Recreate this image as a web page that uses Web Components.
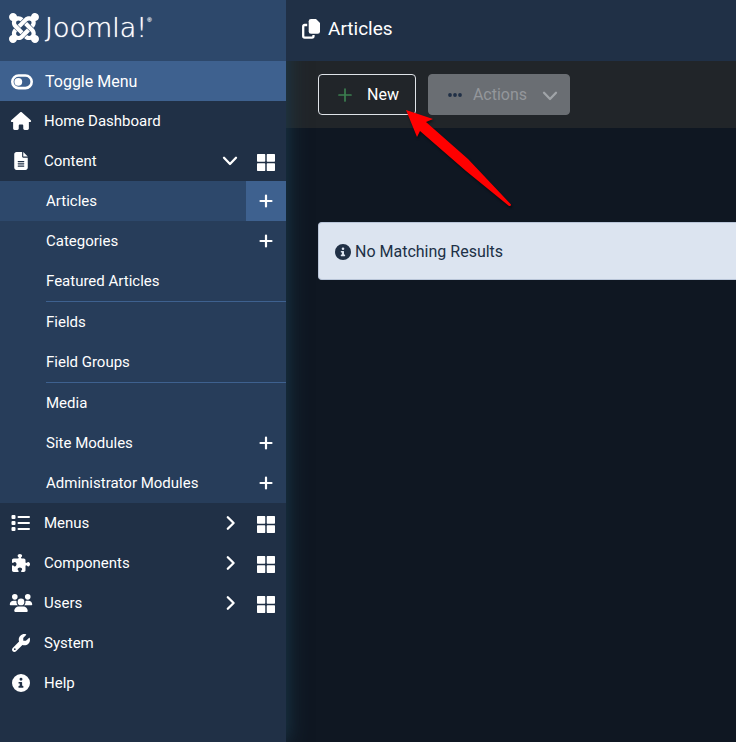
<!DOCTYPE html>
<html lang="en">
<head>
<meta charset="utf-8">
<title>Articles - Joomla! Administrator</title>
<style>
html, body { margin: 0; min-height: 100%; background: #0f1722; }
body { font-family: Roboto, "Liberation Sans", sans-serif; color: #fff; overflow-x: hidden; }
</style>
</head>
<body>
<admin-page></admin-page>
<script>
const ICONS = {
  toggle: ['0 0 22 16', '<rect x="1.3" y="1.5" width="19.400" height="12.600" rx="6.3" fill="none" stroke="currentColor" stroke-width="2.6"/><circle cx="7.3" cy="7.8" r="3.9"/>'],
  home: ['0 0 576 512', '<path d="M575.8 255.5c0 18-15 32.1-32 32.1h-32l.7 160.2c0 2.7-.2 5.400-.5 8.100V472c0 22.100-17.900 40-40 40H392c-22.100 0-40-17.900-40-40V384c0-17.700-14.300-32-32-32H256c-17.700 0-32 14.300-32 32v88c0 22.100-17.900 40-40 40H104c-22.100 0-40-17.900-40-40V287.600H32c-18 0-32-14-32-32.100c0-9 3-17 10-24L266.400 8c7-7 15-8 22-8s15 2 21 7L564.800 231.500c8 7 12 15 11 24z"/>'],
  file: ['0 0 384 512', '<path fill-rule="evenodd" d="M64 0C28.700 0 0 28.700 0 64V448c0 35.300 28.700 64 64 64H320c35.300 0 64-28.700 64-64V160H256c-17.700 0-32-14.300-32-32V0H64zM112 256H272c8.800 0 16 7.200 16 16s-7.200 16-16 16H112c-8.800 0-16-7.200-16-16s7.200-16 16-16zm0 64H272c8.800 0 16 7.200 16 16s-7.200 16-16 16H112c-8.800 0-16-7.200-16-16s7.200-16 16-16zm0 64H272c8.800 0 16 7.200 16 16s-7.200 16-16 16H112c-8.800 0-16-7.200-16-16s7.200-16 16-16z"/><path d="M256 0V128H384z"/>'],
  list: ['0 0 19 18', '<rect x="0" y="1" width="4" height="4" rx="1"/><rect x="0" y="7" width="4" height="4" rx="1"/><rect x="0" y="13" width="4" height="4" rx="1"/><path d="M7 3H17.500M7 9H17.500M7 15H17.500" stroke="currentColor" stroke-width="2" stroke-linecap="round"/>'],
  puzzle: ['0 0 512 512', '<path d="M192 104.8c0-9.2-5.8-17.3-13.2-22.8C167.2 73.3 160 61.3 160 48c0-26.5 28.700-48 64-48s64 21.500 64 48c0 13.300-7.200 25.300-18.800 34c-7.400 5.500-13.200 13.600-13.200 22.800c0 12.800 10.400 23.200 23.200 23.200H336c26.500 0 48 21.500 48 48v56.800c0 12.800 10.400 23.200 23.200 23.200c9.200 0 17.300-5.800 22.800-13.200c8.700-11.600 20.700-18.800 34-18.800c26.500 0 48 28.700 48 64s-21.500 64-48 64c-13.300 0-25.300-7.200-34-18.800c-5.500-7.400-13.600-13.200-22.800-13.200c-12.800 0-23.200 10.400-23.200 23.200V464c0 26.500-21.500 48-48 48H279.200c-12.800 0-23.200-10.400-23.200-23.200c0-9.200 5.800-17.300 13.200-22.800c11.600-8.700 18.800-20.700 18.800-34c0-26.500-28.700-48-64-48s-64 21.500-64 48c0 13.300 7.200 25.300 18.800 34c7.400 5.500 13.200 13.600 13.200 22.800c0 12.800-10.400 23.200-23.200 23.200H48c-26.500 0-48-21.500-48-48V343.200C0 330.400 10.400 320 23.200 320c9.200 0 17.300 5.800 22.800 13.200C54.700 344.800 66.700 352 80 352c26.500 0 48-28.700 48-64s-21.500-64-48-64c-13.300 0-25.300 7.200-34 18.800C40.500 250.200 32.400 256 23.200 256C10.400 256 0 245.600 0 232.800V176c0-26.500 21.500-48 48-48H168.800c12.800 0 23.200-10.400 23.200-23.200z"/>'],
  users: ['0 0 640 512', '<path d="M144 0a80 80 0 1 1 0 160A80 80 0 1 1 144 0zM512 0a80 80 0 1 1 0 160A80 80 0 1 1 512 0zM0 298.700C0 239.800 47.800 192 106.700 192h42.700c15.900 0 31 3.500 44.600 9.700c-1.300 7.200-1.900 14.700-1.900 22.300c0 38.200 16.800 72.500 43.300 96H21.300C9.600 320 0 310.400 0 298.700zM404.600 320c26.600-23.500 43.300-57.800 43.300-96c0-7.600-.7-15-1.900-22.300c13.600-6.300 28.700-9.700 44.600-9.700h42.700C592.200 192 640 239.800 640 298.700c0 11.800-9.600 21.300-21.300 21.300H404.600zM224 224a96 96 0 1 1 192 0 96 96 0 1 1-192 0zM128 485.300C128 411.700 187.700 352 261.300 352H378.700C452.300 352 512 411.700 512 485.300c0 14.700-11.900 26.700-26.700 26.700H154.700c-14.700 0-26.700-11.900-26.700-26.700z"/>'],
  wrench: ['0 0 512 512', '<path fill-rule="evenodd" d="M352 320c88.400 0 160-71.600 160-160c0-15.300-2.200-30.100-6.200-44.200c-3.100-10.800-16.400-13.200-24.300-5.300l-76.800 76.800c-3 3-7.100 4.700-11.300 4.700H336c-8.800 0-16-7.200-16-16V118.600c0-4.200 1.700-8.300 4.700-11.300l76.800-76.800c7.900-7.900 5.400-21.200-5.300-24.300C382.100 2.200 367.300 0 352 0C263.600 0 192 71.600 192 160c0 19.100 3.400 37.500 9.500 54.500L19.900 396.100C7.200 408.800 0 426.100 0 444.100C0 481.600 30.400 512 67.900 512c18 0 35.300-7.200 48-19.900L297.500 310.500c17 6.200 35.400 9.500 54.500 9.500zM80 408a24 24 0 1 1 0 48 24 24 0 1 1 0-48z"/>'],
  info: ['0 0 512 512', '<path fill-rule="evenodd" d="M256 512A256 256 0 1 0 256 0a256 256 0 1 0 0 512zM200 336h20V272H200c-10 0-16-6-16-16v-16c0-10 6-16 16-16h72c10 0 16 6 16 16v96h20c10 0 16 6 16 16v24c0 10-6 16-16 16H200c-10 0-16-6-16-16v-24c0-10 6-16 16-16zm56-226a42 42 0 1 1 0 84 42 42 0 1 1 0-84z"/>'],
  copy: ['0 0 18 20', '<path d="M9 0h5l4 4v8.500a2.300 2.300 0 0 1-2.300 2.300H9a2.300 2.300 0 0 1-2.300-2.300V2.300A2.300 2.300 0 0 1 9 0z"/><path d="M5.200 6H2.600A1.400 1.400 0 0 0 1.200 7.400v9.700a1.500 1.500 0 0 0 1.500 1.500H10a1.500 1.500 0 0 0 1.500-1.500v-1" fill="none" stroke="currentColor" stroke-width="2.300"/>'],
  plus: ['0 0 14 14', '<path d="M7 1.500V12.500M1.500 7H12.500" stroke="currentColor" stroke-width="2.200" stroke-linecap="round"/>'],
  plusthin: ['0 0 14 14', '<path d="M7 1V13M1 7H13" stroke="currentColor" stroke-width="1.700" stroke-linecap="round"/>'],
  grid: ['0 0 17 16', '<path d="M.6 0H7.200a.6.6 0 0 1 .6.6V6.600a.6.6 0 0 1-.6.6H.6a.6.6 0 0 1-.6-.6V.6A.6.6 0 0 1 .6 0zM9.800 0h6.600a.6.6 0 0 1 .6.6V6.600a.6.6 0 0 1-.6.6H9.800a.6.6 0 0 1-.6-.6V.6a.6.6 0 0 1 .6-.6zM.6 8.800H7.200a.6.6 0 0 1 .6.6v6a.6.6 0 0 1-.6.6H.6a.6.6 0 0 1-.6-.6v-6a.6.6 0 0 1 .6-.6zM9.800 8.800h6.600a.6.6 0 0 1 .6.6v6a.6.6 0 0 1-.6.6H9.800a.6.6 0 0 1-.6-.6v-6a.6.6 0 0 1 .6-.6z"/>'],
  down: ['0 0 16 10', '<path d="M2 1.800L8 8L14 1.800" fill="none" stroke="currentColor" stroke-width="2.300" stroke-linecap="round" stroke-linejoin="round"/>'],
  right: ['0 0 10 16', '<path d="M2.800 2.200L8.600 8L2.800 13.800" fill="none" stroke="currentColor" stroke-width="2.300" stroke-linecap="round" stroke-linejoin="round"/>'],
  dots: ['0 0 14 4', '<circle cx="2" cy="2" r="1.900"/><circle cx="7" cy="2" r="1.900"/><circle cx="12" cy="2" r="1.900"/>'],
  joomla: ['0 32 448 448', '<path d="M.6 92.100C.6 58.800 27.400 32 60.400 32c30 0 54.500 21.900 59.200 50.200 32.600-7.600 67.100.6 96.500 30l-44.300 44.300c-20.500-20.500-42.600-16.300-55.400-3.500-14.300 14.300-14.300 37.900 0 52.200l99.500 99.500-44 44.300c-87.700-87.200-49.700-49.700-99.800-99.700-26.800-26.500-35-64.800-24.800-98.900C20.400 144.600.6 120.700.6 92.100zm129.500 116.400l44.300 44.300c10-10 89.700-89.700 99.700-99.800 14.300-14.300 37.600-14.300 51.900 0 12.800 12.800 17 35-3.500 55.400l44 44.300c31.200-31.200 38.500-67.600 28.900-101.200 29.200-4.100 51.900-29.200 51.900-59.500 0-33.200-26.800-60.100-59.800-60.100-30.300 0-55.400 22.500-59.500 51.600-33.800-9.900-71.700-1.500-98.300 25.100-18.300 19.100-71.100 71.500-99.600 99.900zm266.300 152.200c8.200-32.700-.9-68.500-26.300-93.900-11.800-12.200 5 4.700-99.500-99.700l-44.300 44.300 99.700 99.700c14.300 14.300 14.300 37.600 0 51.900-12.800 12.800-35 17-55.400-3.500l-44 44.300c27.600 30.200 68 38.800 102.700 28 5.500 27.400 29.700 48.100 58.900 48.100 33 0 59.800-26.800 59.800-60.100 0-30.200-22.500-55-51.600-59.100zm-84.300-53.100l-44-44.300c-87 86.400-50.400 50.400-99.700 99.800-14.300 14.300-37.600 14.300-51.900 0-13.100-13.400-16.900-35.300 3.200-55.400l-44-44.300c-30.200 30.200-38 65.200-29.500 98.300-26.700 6-46.200 29.900-46.200 58.200C0 453.200 26.800 480 59.800 480c28.600 0 52.500-19.800 58.600-46.700 32.700 8.200 68.500-.6 94.200-26 32.100-32 12.200-12.400 99.500-99.700z"/>']
};

const define = (name, html, setup) => {
  const template = document.createElement('template');
  template.innerHTML = html;
  customElements.define(name, class extends HTMLElement {
    constructor() {
      super();
      this.attachShadow({ mode: 'open' }).append(template.content.cloneNode(true));
    }
    connectedCallback() { if (setup) setup(this, this.shadowRoot); }
  });
};

define('ui-icon', `<style>
  :host { display: inline-flex; flex: none; width: 20px; height: 20px; }
  svg { width: 100%; height: 100%; fill: currentColor; display: block; }
</style><svg aria-hidden="true"></svg>`, (el, root) => {
  const [box, shapes] = ICONS[el.getAttribute('name')];
  const svg = root.querySelector('svg');
  svg.setAttribute('viewBox', box);
  svg.innerHTML = shapes;
});

define('brand-logo', `<style>
  :host { display: block; background: #2d486b; }
  a { display: flex; align-items: center; gap: 6px; height: 61px; padding: 0 0 5px 9px; box-sizing: border-box; color: #fff; text-decoration: none; }
  ui-icon { width: 30px; height: 30px; }
  .word { font: 200 27px/32px "DejaVu Sans Light", "DejaVu Sans", sans-serif; display: flex; text-shadow: 0 0 1px #fff; }
  sup { font: 6px/16px "Liberation Sans", sans-serif; }
</style><a href="#"><ui-icon name="joomla"></ui-icon><span class="word">Joomla!<sup>®</sup></span></a>`);

define('menu-toggle', `<style>
  :host { display: block; }
  button { all: unset; box-sizing: border-box; width: 100%; height: 40px; display: flex; align-items: center; gap: 12px; padding: 1px 0 0 11px; background: #3e618f; color: #fff; font: 16px/24px Roboto, sans-serif; cursor: pointer; }
  ui-icon { width: 22px; height: 16px; }
</style><button type="button"><ui-icon name="toggle"></ui-icon><slot></slot></button>`);

define('menu-item', `<style>
  :host { display: block; font-size: 15px; line-height: 20px; }
  .row { display: flex; height: 40px; }
  a { color: #fff; text-decoration: none; display: flex; align-items: center; }
  .main { flex: 1; min-width: 0; }
  .lead { width: 44px; display: flex; justify-content: center; flex: none; box-sizing: border-box; padding-right: 2px; }
  :host([sub]) .lead { width: 46px; }
  .lead ui-icon { width: 24px; height: 18px; }
  .label { flex: 1; }
  .arrow { width: 32px; display: flex; justify-content: center; }
  .arrow ui-icon { width: 16px; height: 16px; }
  .extra ui-icon[name=grid] { width: 18px; height: 17px; }
  .extra ui-icon[name=plus] { width: 14px; height: 14px; }
  .extra { width: 40px; justify-content: center; box-sizing: border-box; }
  .extra[data-icon=grid] { padding-top: 2px; }
  :host([active]) .row { background: #2d486b; }
  :host([active]) .extra { background: #3e618f; }
</style><div class="row"><a class="main" href="#"><span class="lead"></span><span class="label"><slot></slot></span><span class="arrow"></span></a></div>`, (el, root) => {
  const put = (target, name) => {
    const icon = document.createElement('ui-icon');
    icon.setAttribute('name', name);
    target.append(icon);
  };
  const get = key => el.getAttribute(key);
  if (get('icon')) put(root.querySelector('.lead'), get('icon'));
  if (get('arrow')) put(root.querySelector('.arrow'), get('arrow'));
  if (get('extra')) {
    const link = document.createElement('a');
    link.className = 'extra';
    link.dataset.icon = get('extra');
    link.href = '#';
    link.setAttribute('aria-label', (get('extra') === 'plus' ? 'Add ' : 'Dashboard ') + el.textContent);
    put(link, get('extra'));
    root.querySelector('.row').append(link);
  }
});

define('menu-group', `<style>
  :host { display: block; background: #273d5a; }
  ::slotted(hr) { border: 0; height: 1px; margin: 0 0 0 46px; background: #3e618f; }
</style><slot></slot>`);

define('side-bar', `<style>
  :host { display: block; background: #203046; box-shadow: 0 0 20px #1c3d50; }
</style><nav aria-label="Main menu">
  <brand-logo></brand-logo>
  <menu-toggle>Toggle Menu</menu-toggle>
  <menu-item icon="home">Home Dashboard</menu-item>
  <menu-item icon="file" arrow="down" extra="grid">Content</menu-item>
  <menu-group>
    <menu-item sub active extra="plus">Articles</menu-item>
    <menu-item sub extra="plus">Categories</menu-item>
    <menu-item sub>Featured Articles</menu-item>
    <hr>
    <menu-item sub>Fields</menu-item>
    <menu-item sub>Field Groups</menu-item>
    <hr>
    <menu-item sub>Media</menu-item>
    <menu-item sub extra="plus">Site Modules</menu-item>
    <menu-item sub extra="plus">Administrator Modules</menu-item>
  </menu-group>
  <menu-item icon="list" arrow="right" extra="grid">Menus</menu-item>
  <menu-item icon="puzzle" arrow="right" extra="grid">Components</menu-item>
  <menu-item icon="users" arrow="right" extra="grid">Users</menu-item>
  <menu-item icon="wrench">System</menu-item>
  <menu-item icon="info">Help</menu-item>
</nav>`);

define('page-title', `<style>
  :host { display: flex; align-items: center; gap: 8px; height: 61px; padding: 0 0 4px 16px; box-sizing: border-box; background: #203046; position: relative; z-index: 2; }
  ui-icon { width: 18px; height: 20px; }
  h1 { margin: 0; font-size: 19px; line-height: 24px; font-weight: 400; }
</style><ui-icon name="copy"></ui-icon><h1><slot></slot></h1>`);

define('tool-button', `<style>
  :host { display: block; position: relative; }
  button { height: 41px; box-sizing: border-box; display: flex; align-items: center; border: 1px solid #dfe3e8; border-radius: 4px; background: #212529; color: #fff; font: 16px/24px Roboto, sans-serif; padding: 0 16px 0 19px; gap: 15px; }
  .lead { display: flex; color: #3b7f4f; }
  .lead ui-icon { width: 14px; height: 14px; }
  .tail { display: none; width: 16px; height: 12px; }
  :host([disabled]) button { background: #6a6e73; border-color: #6a6e73; color: #94979b; padding: 0 11px 0 19px; gap: 11px; }
  :host([disabled]) .lead { color: #203046; }
  :host([disabled]) .tail { display: block; color: #a0a4a8; margin: 2px 0 0 4px; }
</style><button type="button"><span class="lead"></span><slot></slot><ui-icon class="tail" name="down"></ui-icon></button><slot name="pointer"></slot>`, (el, root) => {
  const icon = document.createElement('ui-icon');
  icon.setAttribute('name', el.getAttribute('icon'));
  root.querySelector('.lead').append(icon);
  root.querySelector('button').disabled = el.hasAttribute('disabled');
});

define('red-arrow', `<style>
  :host { position: absolute; left: 88px; top: 36px; z-index: 3; pointer-events: none; filter: drop-shadow(1px 2px 1px rgba(0,0,0,.5)); }
  svg { display: block; }
</style><svg width="106" height="97" viewBox="0 0 106 97" aria-hidden="true"><path fill="#f00" d="M0 0L27 9L20 12L62 49L105 94.500Q105 96.500 103 96L60 61L14 21L11 27z"/></svg>`);

define('info-alert', `<style>
  :host { display: flex; align-items: center; gap: 4px; min-height: 58px; box-sizing: border-box; padding: 1px 16px 0; background: #dce4f0; border: 1px solid #b9c5d8; border-right: 0; border-radius: 4px 0 0 4px; color: #203046; font-size: 16px; line-height: 24px; }
  ui-icon { width: 16px; height: 16px; }
</style><ui-icon name="info"></ui-icon><span><slot></slot></span>`);

define('admin-page', `<style>
  :host { display: grid; grid-template-columns: 286px minmax(0, 1fr); min-height: 100vh; }
  side-bar { position: relative; z-index: 1; }
  .tools { display: flex; gap: 12px; padding: 13px 32px; background: #212529; }
  .content { padding: 94px 0 32px 32px; }
</style>
<side-bar></side-bar>
<main>
  <page-title>Articles</page-title>
  <div class="tools">
    <tool-button icon="plusthin">New<red-arrow slot="pointer"></red-arrow></tool-button>
    <tool-button icon="dots" disabled>Actions</tool-button>
  </div>
  <div class="content"><info-alert>No Matching Results</info-alert></div>
</main>`);
</script>
</body>
</html>
